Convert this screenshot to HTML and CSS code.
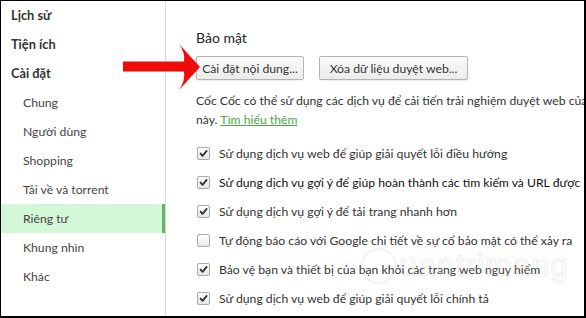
FILE: index.html
```html
<!DOCTYPE html>
<html lang="vi">
<head>
<meta charset="utf-8">
<title>Cài đặt - Riêng tư</title>
<link rel="stylesheet" href="styles.css">
</head>
<body>
<div class="frame">
  <nav class="sidebar">
    <div class="nav-item top">Lịch sử</div>
    <div class="nav-item top">Tiện ích</div>
    <div class="nav-item top">Cài đặt</div>
    <div class="nav-item sub">Chung</div>
    <div class="nav-item sub">Người dùng</div>
    <div class="nav-item sub">Shopping</div>
    <div class="nav-item sub">Tải về và torrent</div>
    <div class="nav-item sub active">Riêng tư</div>
    <div class="nav-item sub">Khung nhìn</div>
    <div class="nav-item sub">Khác</div>
  </nav>
  <main class="content">
    <h2 class="section-title">Bảo mật</h2>
    <div class="buttons">
      <button class="btn btn-content">Cài đặt nội dung...</button>
      <button class="btn btn-clear">Xóa dữ liệu duyệt web...</button>
    </div>
    <p class="desc">Cốc Cốc có thể sử dụng các dịch vụ để cải tiến trải nghiệm duyệt web của bạn.<br>này. <a class="link" href="#">Tìm hiểu thêm</a></p>
    <ul class="options">
      <li class="option"><span class="cb checked"><svg viewBox="0 0 13 13"><path d="M3 6.6 L5.4 9.2 L10.2 3.4" fill="none" stroke="#333" stroke-width="2.2" stroke-linecap="round" stroke-linejoin="round"/></svg></span><span>Sử dụng dịch vụ web để giúp giải quyết lỗi điều hướng</span></li>
      <li class="option dark"><span class="cb checked"><svg viewBox="0 0 13 13"><path d="M3 6.6 L5.4 9.2 L10.2 3.4" fill="none" stroke="#333" stroke-width="2.2" stroke-linecap="round" stroke-linejoin="round"/></svg></span><span>Sử dụng dịch vụ gợi ý để giúp hoàn thành các tìm kiếm và URL được nhập</span></li>
      <li class="option"><span class="cb checked"><svg viewBox="0 0 13 13"><path d="M3 6.6 L5.4 9.2 L10.2 3.4" fill="none" stroke="#333" stroke-width="2.2" stroke-linecap="round" stroke-linejoin="round"/></svg></span><span>Sử dụng dịch vụ gợi ý để tải trang nhanh hơn</span></li>
      <li class="option"><span class="cb"></span><span>Tự động báo cáo với Google chi tiết về sự cố bảo mật có thể xảy ra</span></li>
      <li class="option"><span class="cb checked"><svg viewBox="0 0 13 13"><path d="M3 6.6 L5.4 9.2 L10.2 3.4" fill="none" stroke="#333" stroke-width="2.2" stroke-linecap="round" stroke-linejoin="round"/></svg></span><span>Bảo vệ bạn và thiết bị của bạn khỏi các trang web nguy hiểm</span></li>
      <li class="option"><span class="cb checked"><svg viewBox="0 0 13 13"><path d="M3 6.6 L5.4 9.2 L10.2 3.4" fill="none" stroke="#333" stroke-width="2.2" stroke-linecap="round" stroke-linejoin="round"/></svg></span><span>Sử dụng dịch vụ web để giúp giải quyết lỗi chính tả</span></li>
    </ul>
  </main>
  <svg class="arrow" viewBox="0 0 90 50" width="90" height="50">
    <path d="M2 18.5 L63 18.5 Q64.5 10 58 1 L79 24 L58 47 Q64.5 38 63 28.5 L2 28.5 Z" fill="#f00a0a"/>
  </svg>
  <div class="watermark">
    <span class="bulb"></span><span class="wm-text">uantrimang</span>
  </div>
</div>
</body>
</html>
```

FILE: styles.css
```css
* { box-sizing: border-box; }
html, body { margin: 0; padding: 0; background: #fff; }
body { width: 586px; height: 318px; overflow: hidden; }

.frame {
  position: relative;
  width: 586px;
  height: 318px;
  border-top: 1px solid #000;
  border-left: 1px solid #000;
  border-right: 2px solid #000;
  border-bottom: 2px solid #000;
  display: flex;
  overflow: hidden;
  font-family: Lato, "Noto Sans", sans-serif;
  font-size: 12.2px;
  color: #333;
  background: #fff;
}

.sidebar {
  width: 165px;
  flex: none;
  border-right: 1px solid #d9d9d9;
  display: flex;
  flex-direction: column;
}
.nav-item {
  height: 29px;
  line-height: 29px;
  white-space: nowrap;
}
.nav-item.top { padding-left: 10px; font-weight: bold; color: #333; font-size: 12.8px; }
.nav-item.sub { padding-left: 22px; color: #444; }
.nav-item.active {
  background: #d4f7d8;
  box-shadow: inset -3px 0 0 #5cb85c;
}

.content {
  flex: 1;
  min-width: 0;
  padding: 27px 0 0 30px;
  white-space: nowrap;
  overflow: hidden;
}
.section-title {
  margin: 0;
  font-size: 14px;
  font-weight: normal;
  line-height: 20px;
  color: #222;
}
.buttons {
  display: flex;
  gap: 15px;
  margin-top: 8px;
}
.btn {
  height: 24px;
  padding: 0;
  font-family: inherit;
  font-size: 12.2px;
  color: #333;
  text-align: center;
  border: 1px solid #b3b3b3;
  border-radius: 2px;
  background: linear-gradient(#fafafa, #ececec);
  box-shadow: 0 1px 0 rgba(0,0,0,0.06);
}
.btn-content { width: 108px; }
.btn-clear { width: 149px; }
.desc {
  margin: 11px 0 0;
  line-height: 19px;
  color: #333;
}
.link { color: #4aa844; text-decoration: underline; }

.options {
  list-style: none;
  margin: 10px 0 0;
  padding: 0;
}
.option {
  height: 29px;
  display: flex;
  align-items: center;
  gap: 9px;
  padding-left: 1px;
  color: #333;
}
.option.dark { color: #111; }
.cb {
  width: 13px;
  height: 13px;
  flex: none;
  border: 1px solid #aaa;
  border-radius: 2px;
  background: linear-gradient(#fff, #e6e6e6);
  display: flex;
}
.cb svg { width: 11px; height: 11px; }

.arrow {
  position: absolute;
  left: 120px;
  top: 42px;
}

.watermark {
  position: absolute;
  left: 360px;
  top: 246px;
  display: flex;
  align-items: center;
  pointer-events: none;
  opacity: 0.35;
}
.bulb {
  width: 36px;
  height: 36px;
  border: 2px solid #ddd;
  border-radius: 50%;
}
.wm-text {
  font-family: "Liberation Sans", sans-serif;
  font-size: 32px;
  color: transparent;
  -webkit-text-stroke: 1px #cfcfcf;
  letter-spacing: 1px;
  margin-left: 2px;
}
```
